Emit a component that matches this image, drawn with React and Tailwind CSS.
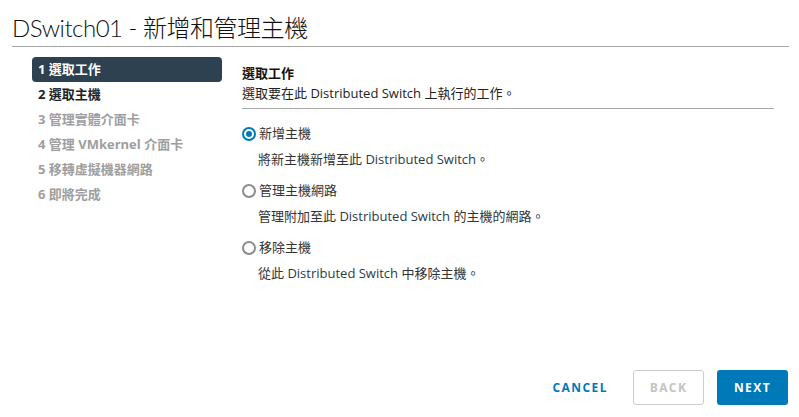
import { useState } from "react";

const font = {
  fontFamily: '"Open Sans", "Noto Sans CJK TC", sans-serif',
};

const steps = [
  { n: 1, label: "選取工作", state: "active" },
  { n: 2, label: "選取主機", state: "next" },
  { n: 3, label: "管理實體介面卡", state: "off" },
  { n: 4, label: "管理 VMkernel 介面卡", state: "off" },
  { n: 5, label: "移轉虛擬機器網路", state: "off" },
  { n: 6, label: "即將完成", state: "off" },
];

const options = [
  { id: "add", label: "新增主機", desc: ["將新主機新增至此 ", "Distributed Switch", "。"] },
  { id: "manage", label: "管理主機網路", desc: ["管理附加至此 ", "Distributed Switch", " 的主機的網路。"] },
  { id: "remove", label: "移除主機", desc: ["從此 ", "Distributed Switch", " 中移除主機。"] },
];

function Radio({ checked }) {
  // 單選圓點
  if (checked) {
    return (
      <span className="w-[14px] h-[14px] rounded-full border-[2px] border-[#0079b8] flex items-center justify-center shrink-0">
        <span className="w-[6px] h-[6px] rounded-full bg-[#0079b8]" />
      </span>
    );
  }
  return <span className="w-[14px] h-[14px] rounded-full border-[2px] border-[#8c8c8c] shrink-0" />;
}

export default function App() {
  const [selected, setSelected] = useState("add");

  return (
    <div className="w-[799px] h-[417px] bg-white flex flex-col text-[#313131]" style={font}>
      <div className="h-[47px] ml-3 mr-[10px] border-b border-[#a8a8a8] pt-[14px]">
        <h1
          className="text-[24px] leading-[28px] font-light tracking-[-0.02em] text-[#111]"
          style={{ fontFamily: '"Lato", "Noto Sans CJK TC", sans-serif' }}
        >
          DSwitch01 - 新增和管理主機
        </h1>
      </div>

      <div className="flex flex-1 pt-[10px]">
        <nav className="w-[190px] ml-[32px] flex flex-col">
          {steps.map((s) => (
            <div
              key={s.n}
              className={
                "h-[25px] flex items-center px-[6px] text-[13px] font-bold rounded-[4px] " +
                (s.state === "active"
                  ? "bg-[#2d4150] text-white"
                  : s.state === "next"
                  ? "text-[#222]"
                  : "text-[#9e9e9e]")
              }
            >
              {s.n} {s.label}
            </div>
          ))}
        </nav>

        <div className="ml-[20px] w-[532px] flex flex-col pt-[6px]">
          <div className="border-b border-[#a8a8a8] pb-[5px]">
            <h2 className="text-[13px] leading-[20px] font-bold text-[#111]">選取工作</h2>
            <p className="text-[13px] leading-[20px] text-[#222]">選取要在此 Distributed Switch 上執行的工作。</p>
          </div>

          <div className="flex flex-col pt-[15px] gap-[12px]">
            {options.map((o) => (
              <div key={o.id} className="flex flex-col">
                <label
                  className="flex items-center gap-[3px] h-[20px] cursor-pointer"
                  onClick={() => setSelected(o.id)}
                >
                  <Radio checked={selected === o.id} />
                  <span className="text-[13px] text-[#333]">{o.label}</span>
                </label>
                <p className="text-[13px] leading-[20px] mt-[5px] pl-[16px] text-[#333]">
                  {o.desc[0]}
                  <span className="text-[#2c3a4c]">{o.desc[1]}</span>
                  {o.desc[2]}
                </p>
              </div>
            ))}
          </div>
        </div>
      </div>

      <div className="flex justify-end items-center gap-[13px] pr-[11px] pb-[12px]">
        <button className="h-[35px] px-[12px] text-[12px] font-bold tracking-[0.12em] text-[#0079b8]">
          CANCEL
        </button>
        <button className="h-[35px] w-[71px] rounded-[3px] border border-[#cccccc] text-[12px] font-bold tracking-[0.12em] text-[#c4c4c4]">
          BACK
        </button>
        <button className="h-[35px] w-[71px] rounded-[3px] bg-[#0079b8] text-[12px] font-bold tracking-[0.12em] text-white">
          NEXT
        </button>
      </div>
    </div>
  );
}
